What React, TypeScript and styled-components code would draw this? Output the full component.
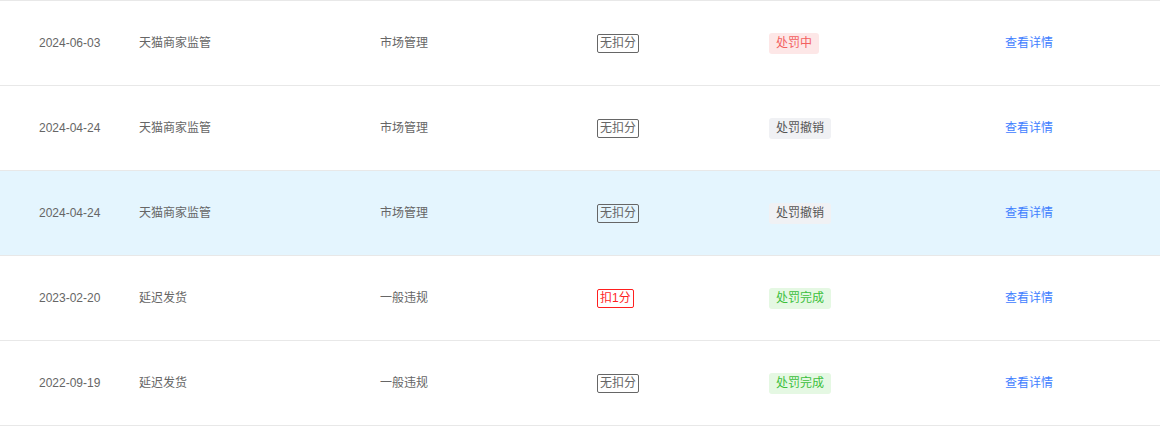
import React from 'react';
import styled, { createGlobalStyle } from 'styled-components';

type Status = 'pending' | 'revoked' | 'done';

interface Record {
  date: string;
  category: string;
  type: string;
  score: string;
  deducted: boolean;
  status: Status;
  highlight?: boolean;
}

const records: Record[] = [
  { date: '2024-06-03', category: '天猫商家监管', type: '市场管理', score: '无扣分', deducted: false, status: 'pending' },
  { date: '2024-04-24', category: '天猫商家监管', type: '市场管理', score: '无扣分', deducted: false, status: 'revoked' },
  { date: '2024-04-24', category: '天猫商家监管', type: '市场管理', score: '无扣分', deducted: false, status: 'revoked', highlight: true },
  { date: '2023-02-20', category: '延迟发货', type: '一般违规', score: '扣1分', deducted: true, status: 'done' },
  { date: '2022-09-19', category: '延迟发货', type: '一般违规', score: '无扣分', deducted: false, status: 'done' },
];

const statusText: { [k in Status]: string } = {
  pending: '处罚中',
  revoked: '处罚撤销',
  done: '处罚完成',
};

const statusColors: { [k in Status]: { bg: string; fg: string } } = {
  pending: { bg: '#fde7e7', fg: '#f35f5f' },
  revoked: { bg: '#f0f1f4', fg: '#555555' },
  done: { bg: '#e5f8e3', fg: '#3cbf3c' },
};

const GlobalStyle = createGlobalStyle`
  html, body {
    margin: 0;
    padding: 0;
    background: #ffffff;
  }
  body {
    font-family: "Liberation Sans", "Noto Sans CJK SC", sans-serif;
    font-size: 12px;
    color: #666666;
  }
`;

const Table = styled.div`
  width: 1160px;
  border-bottom: 1px solid #e8e8e8;
`;

const Row = styled.div<{ $highlight?: boolean }>`
  display: grid;
  grid-template-columns: 100px 241px 217px 172px 236px 1fr;
  align-items: center;
  height: 84px;
  padding-left: 39px;
  border-top: 1px solid #e8e8e8;
  background: ${(p) => (p.$highlight ? '#e4f5fe' : '#ffffff')};
`;

const Cell = styled.div`
  line-height: 17px;
  color: #666666;
  white-space: nowrap;
`;

const ScoreTag = styled.span<{ $deducted: boolean }>`
  display: inline-block;
  padding: 0 2px;
  line-height: 17px;
  border: 1px solid ${(p) => (p.$deducted ? '#ff1f1f' : '#666666')};
  border-radius: 2px;
  color: ${(p) => (p.$deducted ? '#ff1f1f' : '#666666')};
`;

const StatusBadge = styled.span<{ $status: Status }>`
  display: inline-block;
  padding: 2px 7px;
  line-height: 17px;
  border-radius: 3px;
  background: ${(p) => statusColors[p.$status].bg};
  color: ${(p) => statusColors[p.$status].fg};
`;

const DetailLink = styled.a`
  color: #3f80ff;
  text-decoration: none;
  cursor: pointer;
  line-height: 17px;
`;

export default function App() {
  return (
    <>
      <GlobalStyle />
      <Table>
        {records.map((r, i) => (
          <Row key={i} $highlight={r.highlight}>
            <Cell>{r.date}</Cell>
            <Cell>{r.category}</Cell>
            <Cell>{r.type}</Cell>
            <Cell>
              <ScoreTag $deducted={r.deducted}>{r.score}</ScoreTag>
            </Cell>
            <Cell>
              <StatusBadge $status={r.status}>{statusText[r.status]}</StatusBadge>
            </Cell>
            <Cell>
              <DetailLink>查看详情</DetailLink>
            </Cell>
          </Row>
        ))}
      </Table>
    </>
  );
}
